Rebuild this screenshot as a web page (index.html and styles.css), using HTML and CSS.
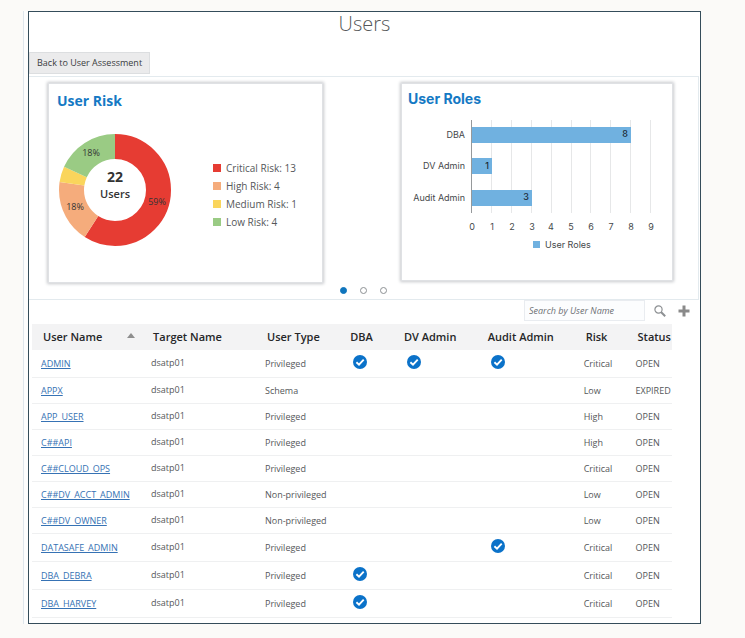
FILE: index.html
```html
<!DOCTYPE html>
<html lang="en">
<head>
<meta charset="utf-8">
<title>Users</title>
<link rel="stylesheet" href="styles.css">
</head>
<body>
<svg class="defs" aria-hidden="true">
  <symbol id="check" viewBox="0 0 14 14">
    <circle cx="7" cy="7" r="7" fill="#0b72c9"/>
    <path d="M3.4 7.2 6 9.6 10.7 4.6" fill="none" stroke="#fff" stroke-width="1.9"/>
  </symbol>
</svg>
<div class="shell">
<main class="frame">
  <h1 class="title">Users</h1>
  <button class="back" type="button">Back to User Assessment</button>

  <section class="charts">
    <div class="cards">
      <article class="card risk">
        <h2>User Risk</h2>
        <div class="risk-body">
          <svg class="donut" viewBox="0 0 112 112" role="img" aria-label="Users by risk">
            <g fill="none" stroke-width="25" transform="rotate(-90 56 56)">
              <circle cx="56" cy="56" r="43.5" pathLength="22" stroke="#e63c33" stroke-dasharray="13 9"/>
              <circle cx="56" cy="56" r="43.5" pathLength="22" stroke="#f5ac7c" stroke-dasharray="4 18" stroke-dashoffset="-13"/>
              <circle cx="56" cy="56" r="43.5" pathLength="22" stroke="#fad55c" stroke-dasharray="1 21" stroke-dashoffset="-17"/>
              <circle cx="56" cy="56" r="43.5" pathLength="22" stroke="#9acb84" stroke-dasharray="4 18" stroke-dashoffset="-18"/>
            </g>
            <text class="slice" x="32" y="22">18%</text>
            <text class="slice" x="98" y="71">59%</text>
            <text class="slice" x="16" y="76">18%</text>
            <text class="total" x="56" y="48">22</text>
            <text class="unit" x="56" y="64">Users</text>
          </svg>
          <ul class="legend">
            <li class="critical">Critical Risk: 13</li>
            <li class="high">High Risk: 4</li>
            <li class="medium">Medium Risk: 1</li>
            <li class="low">Low Risk: 4</li>
          </ul>
        </div>
      </article>

      <article class="card roles">
        <h2>User Roles</h2>
        <svg class="bars" viewBox="0 0 270 140" role="img" aria-label="Users by role">
          <path d="M89.5 8v93M109.5 8v93M129.5 8v93M149.5 8v93M169.5 8v93M188.5 8v93M208.5 8v93M228.5 8v93M248.5 8v93" stroke="#e6e7e8"/>
          <g fill="#70b1e0">
            <rect x="70" y="15" width="159" height="16"/>
            <rect x="70" y="46" width="20" height="16"/>
            <rect x="70" y="78" width="60" height="16"/>
            <rect x="131" y="129" width="7" height="7"/>
          </g>
          <path d="M69.5 8v93" stroke="#96999b"/>
          <g text-anchor="end">
            <text x="63" y="26">DBA</text>
            <text x="63" y="57">DV Admin</text>
            <text x="63" y="89">Audit Admin</text>
          </g>
          <g class="value" text-anchor="end">
            <text x="226" y="25">8</text>
            <text x="87" y="57">1</text>
            <text x="127" y="88">3</text>
          </g>
          <g text-anchor="middle">
            <text x="70" y="118">0</text><text x="90" y="118">1</text><text x="110" y="118">2</text>
            <text x="130" y="118">3</text><text x="149" y="118">4</text><text x="169" y="118">5</text>
            <text x="189" y="118">6</text><text x="209" y="118">7</text><text x="229" y="118">8</text>
            <text x="249" y="118">9</text>
          </g>
          <text x="143" y="136">User Roles</text>
        </svg>
      </article>
    </div>
    <nav class="dots" aria-label="Chart pages">
      <button type="button" class="dot on" aria-label="Page 1"></button>
      <button type="button" class="dot" aria-label="Page 2"></button>
      <button type="button" class="dot" aria-label="Page 3"></button>
    </nav>
  </section>

  <form class="tools">
    <input class="search" type="text" placeholder="Search by User Name" aria-label="Search by User Name">
    <button class="tool" type="button" aria-label="Search">
      <svg viewBox="0 0 12 12"><circle cx="4.5" cy="4.5" r="3.6" fill="none" stroke="#8d9093" stroke-width="1.2"/><path d="M7 7l4.2 4.2" stroke="#8d9093" stroke-width="2"/></svg>
    </button>
    <button class="tool" type="button" aria-label="Add filter">
      <svg viewBox="0 0 12 12"><path d="M6 .5v11M.5 6h11" stroke="#8a8a8a" stroke-width="3"/></svg>
    </button>
  </form>

  <table class="users">
    <colgroup><col class="c-name"><col class="c-target"><col class="c-type"><col class="c-dba"><col class="c-dv"><col class="c-audit"><col class="c-risk"><col class="c-status"></colgroup>
    <thead>
      <tr><th><span class="sorted">User Name<svg class="sort" viewBox="0 0 8 5"><path d="M0 5 4 0l4 5z" fill="#8e8e8e"/></svg></span></th><th>Target Name</th><th>User Type</th><th>DBA</th><th>DV Admin</th><th>Audit Admin</th><th>Risk</th><th>Status</th></tr>
    </thead>
    <tbody>
      <tr class="has-role"><td><a href="#">ADMIN</a></td><td>dsatp01</td><td>Privileged</td><td><svg class="check"><use href="#check"/></svg></td><td><svg class="check"><use href="#check"/></svg></td><td><svg class="check"><use href="#check"/></svg></td><td>Critical</td><td>OPEN</td></tr>
      <tr><td><a href="#">APPX</a></td><td>dsatp01</td><td>Schema</td><td></td><td></td><td></td><td>Low</td><td>EXPIRED</td></tr>
      <tr><td><a href="#">APP_USER</a></td><td>dsatp01</td><td>Privileged</td><td></td><td></td><td></td><td>High</td><td>OPEN</td></tr>
      <tr><td><a href="#">C##API</a></td><td>dsatp01</td><td>Privileged</td><td></td><td></td><td></td><td>High</td><td>OPEN</td></tr>
      <tr><td><a href="#">C##CLOUD_OPS</a></td><td>dsatp01</td><td>Privileged</td><td></td><td></td><td></td><td>Critical</td><td>OPEN</td></tr>
      <tr><td><a href="#">C##DV_ACCT_ADMIN</a></td><td>dsatp01</td><td>Non-privileged</td><td></td><td></td><td></td><td>Low</td><td>OPEN</td></tr>
      <tr><td><a href="#">C##DV_OWNER</a></td><td>dsatp01</td><td>Non-privileged</td><td></td><td></td><td></td><td>Low</td><td>OPEN</td></tr>
      <tr class="has-role"><td><a href="#">DATASAFE_ADMIN</a></td><td>dsatp01</td><td>Privileged</td><td></td><td></td><td><svg class="check"><use href="#check"/></svg></td><td>Critical</td><td>OPEN</td></tr>
      <tr class="has-role"><td><a href="#">DBA_DEBRA</a></td><td>dsatp01</td><td>Privileged</td><td><svg class="check"><use href="#check"/></svg></td><td></td><td></td><td>Critical</td><td>OPEN</td></tr>
      <tr class="has-role"><td><a href="#">DBA_HARVEY</a></td><td>dsatp01</td><td>Privileged</td><td><svg class="check"><use href="#check"/></svg></td><td></td><td></td><td>Critical</td><td>OPEN</td></tr>
    </tbody>
  </table>
</main>
</div>
</body>
</html>
```
FILE: styles.css
```css
* { box-sizing: border-box; }

body {
  margin: 0;
  padding: 11px 44px 13px 23px;
  background: #fbfaf8;
  color: #55575a;
  font-family: "Open Sans", "Noto Sans", sans-serif;
  font-size: 9px;
  line-height: 12px;
}

.defs { display: none; }
svg { display: block; }

.shell {
  padding-left: 4px;
  border-left: 1px solid #dfe6ec;
  background: #fdfdfd;
}

.frame {
  padding-bottom: 5px;
  border: 1px solid #344c5a;
  background: #fff;
}

.title {
  margin: 0;
  height: 40px;
  color: #55585a;
  font-size: 20px;
  font-weight: 300;
  line-height: 24px;
  text-align: center;
}

.back {
  display: block;
  height: 22px;
  margin-bottom: 2px;
  padding: 0 7px;
  border: 1px solid #dcdee0;
  background: #ebebec;
  color: #3a3c3e;
  font: inherit;
}

/* Chart carousel */
.charts {
  margin-right: 1px;
  border: solid #e3eaee;
  border-width: 1px 1px 1px 0;
}

.cards {
  display: flex;
  justify-content: space-between;
  align-items: flex-start;
  padding: 6px 25px 0 19px;
}

.card {
  border: 1px solid #dfe1e4;
  background: #fff;
  box-shadow: 0 0 3px 1px #c8cace;
}

.card h2 {
  margin: 0;
  color: #1479c4;
  font-size: 14px;
  font-weight: 700;
  line-height: 20px;
}

.risk { flex: 0 1 275px; min-height: 200px; padding: 7px 8px; }
.risk-body { display: flex; align-items: center; margin: 23px 0 0 2px; }
.donut { width: 112px; height: 112px; }
.donut text { text-anchor: middle; fill: #333; }
.donut .slice { font-size: 9px; }
.donut .total { font-size: 14px; font-weight: 700; }
.donut .unit { font-size: 11px; font-weight: 600; }

.legend {
  margin: 10px 0 0 42px;
  padding: 0;
  list-style: none;
  font-size: 10px;
  line-height: 18px;
}
.legend li { display: flex; align-items: center; gap: 5px; white-space: nowrap; }
.legend li::before { content: ""; width: 8px; height: 8px; background: currentColor; }
.legend .critical::before { background: #e63c33; }
.legend .high::before { background: #f5ac7c; }
.legend .medium::before { background: #fad55c; }
.legend .low::before { background: #9acb84; }

.roles {
  flex: 0 1 272px;
  min-height: 198px;
  padding-top: 5px;
  font-family: Inter, "Open Sans", sans-serif;
}
.roles h2 { padding-left: 6px; }
.bars { width: 100%; margin-top: 3px; fill: #45484a; font-size: 9px; }
.bars .value { fill: #1c2a35; font-weight: 500; }

.dots { display: flex; justify-content: center; gap: 13px; padding: 4px 0 5px; }
.dot {
  width: 7px;
  height: 7px;
  padding: 0;
  border: 1px solid #8d9194;
  border-radius: 50%;
  background: #fff;
}
.dot.on { border-color: #0f75bd; background: #0f75bd; }

/* Search row */
.tools {
  display: flex;
  justify-content: flex-end;
  align-items: center;
  gap: 12px;
  height: 24px;
  padding: 0 10px 3px 0;
}
.search {
  width: 121px;
  height: 21px;
  margin-right: -3px;
  padding: 0 4px;
  border: 1px solid #e9ecf0;
  background: #fcfdfe;
  color: #4c4e50;
  font: inherit;
}
.search::placeholder { color: #6c7074; font-style: italic; opacity: 1; }
.tool { width: 12px; height: 12px; padding: 0; border: 0; background: none; }

/* Users table */
.users {
  width: calc(100% - 31px);
  margin-left: 3px;
  border-collapse: separate;
  border-spacing: 0;
  table-layout: fixed;
}
.c-name { width: 17.2%; }
.c-target { width: 17.8%; }
.c-type { width: 13%; }
.c-dba { width: 8.4%; }
.c-dv { width: 13.1%; }
.c-audit { width: 15.3%; }
.c-risk { width: 8.1%; }
.c-status { width: 7.1%; }

.users th {
  height: 26px;
  padding: 0 0 0 11px;
  background: #f3f3f4;
  color: #252628;
  font-size: 11px;
  font-weight: 600;
  text-align: left;
  white-space: nowrap;
}
.users td {
  height: 26px;
  padding: 0 0 0 9px;
  border-bottom: 1px solid #eff0f1;
  white-space: nowrap;
}
.users .has-role td { height: 28px; }
.users td:nth-child(2) { padding-bottom: 2px; }
.users a { color: #3672b4; text-decoration: underline; }

.sorted { display: flex; justify-content: space-between; align-items: center; padding-right: 7px; }
.sort { width: 8px; height: 5px; margin-bottom: 4px; }
.check { width: 14px; height: 14px; margin: 0 0 3px 5px; }
```
